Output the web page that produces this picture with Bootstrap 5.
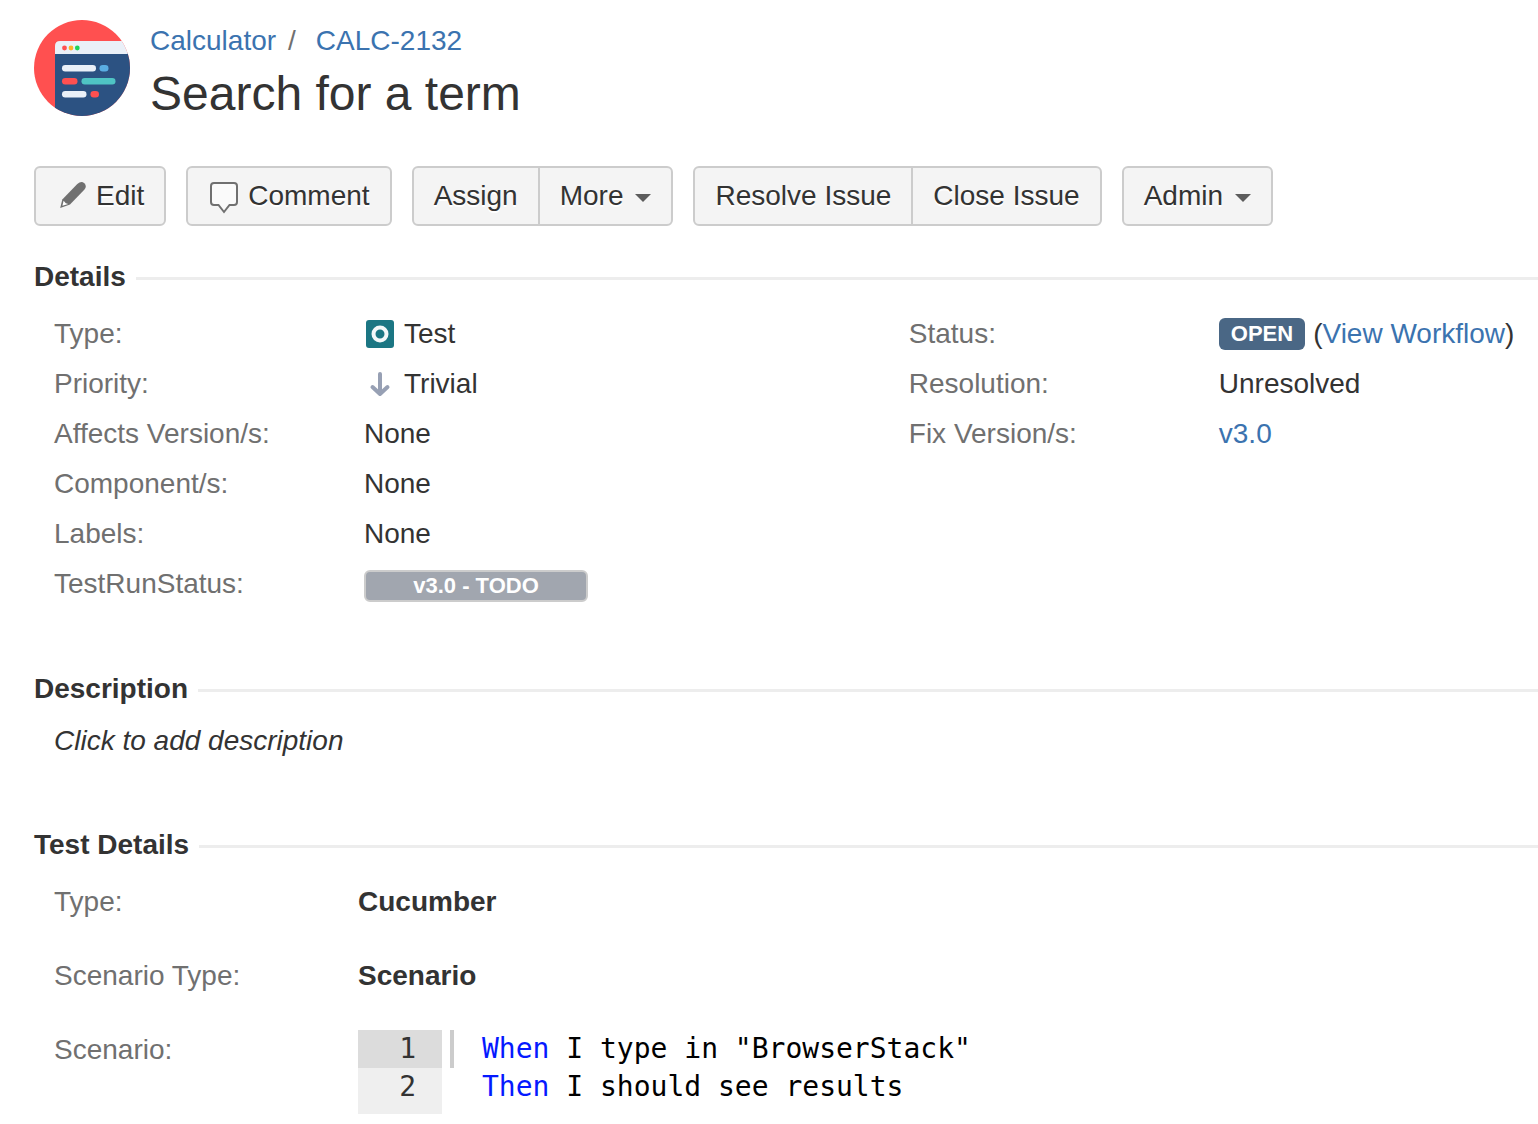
<!DOCTYPE html>
<html lang="en">
<head>
<meta charset="utf-8">
<meta name="viewport" content="width=device-width, initial-scale=1">
<title>CALC-2132 Search for a term</title>
<link rel="stylesheet" href="https://cdn.jsdelivr.net/npm/bootstrap@5.3.0/dist/css/bootstrap.min.css">
<style>
body{font-family:"Liberation Sans",Arial,sans-serif;font-size:28px;line-height:50px;color:#333;background:#fff}
a{color:#3b73af;text-decoration:none}
a:hover{text-decoration:underline}
.issue-page{padding:20px 0 10px 34px}
.issue-head{gap:20px;margin-bottom:40px}
.crumbs{line-height:42px}
.crumbs span{color:#707070;margin:0 20px 0 12px}
.issue-title{font-size:48px;line-height:64px;font-weight:400;margin:0}
.toolbar{gap:20px;margin-bottom:30px}
.btn-tool{--bs-btn-font-size:28px;--bs-btn-line-height:40px;--bs-btn-padding-x:20px;--bs-btn-padding-y:8px;--bs-btn-color:#333;--bs-btn-bg:#f4f4f4;--bs-btn-border-color:#ccc;--bs-btn-border-width:2px;--bs-btn-border-radius:6px;--bs-btn-hover-color:#333;--bs-btn-hover-bg:#e9e9e9;--bs-btn-hover-border-color:#999;--bs-btn-active-color:#333;--bs-btn-active-bg:#ddd;--bs-btn-active-border-color:#999;text-shadow:0 2px 0 #fff;white-space:nowrap}
.btn-tool.with-icon{padding-left:22px}
.btn-tool svg{margin-right:8px}
.toolbar .btn-group>.btn-tool+.btn-tool{margin-left:-2px}
.btn-group>.btn-tool{flex:none}
.btn-tool.dropdown-toggle{display:flex;align-items:center}
.btn-tool.dropdown-toggle::after{border-top:8px solid #5c5c5c;border-left:8px solid transparent;border-right:8px solid transparent;margin:3px 0 0 12px}
.issue-section{margin-bottom:59px}
.section-head{font-size:28px;line-height:42px;font-weight:700;margin:0 0 11px;gap:10px}
.section-head::after{content:"";flex:1;height:3px;margin-top:3px;background:#ededed}
.section-body{padding-left:20px}
.fields{margin:0}
.fields.main-col{flex:0 0 57.6%}
.field-row{display:flex}
.fields dt{font-weight:400;color:#707070;flex:0 0 310px}
.fields dd{margin:0;display:flex;align-items:center;white-space:nowrap}
.fields dd svg{margin-right:8px}
.status-tag{background:#4a6785;color:#fff;font-size:22px;line-height:32px;font-weight:700;border-radius:6px;padding:0 12px;margin-right:8px}
.run-tag{width:224px;background:#a1a6af;color:#fff;border:2px solid #ccc;border-radius:6px;font-size:22px;line-height:28px;font-weight:700;text-align:center;margin-top:4px}
.run-tag:hover{color:#fff}
.desc{line-height:40px;font-style:italic;padding-bottom:4px}
.test-fields .field-row+.field-row{margin-top:24px}
.test-fields dt{flex-basis:304px}
.test-fields dd{font-weight:700}
.fields dd.editor{font-family:"DejaVu Sans Mono",monospace;font-weight:400;line-height:38px;display:block;color:#000;margin-top:5px}
.code-line{display:flex}
.line-no{width:84px;padding-right:26px;text-align:right;color:#333;background:#efefef}
.code-line.current .line-no{background:#dcdcdc}
.code-line:last-child .line-no{padding-bottom:8px}
.code-line code{font:inherit;color:inherit;white-space:pre;margin-left:8px;padding-left:28px;border-left:4px solid transparent}
.code-line.current code{border-color:#ccc}
.kw{color:#0519ff}
</style>
<script src="https://cdn.jsdelivr.net/npm/bootstrap@5.3.0/dist/js/bootstrap.bundle.min.js"></script>
</head>
<body>
<main class="issue-page">
<header class="issue-head d-flex align-items-start">
<svg class="flex-shrink-0" width="96" height="96" viewBox="0 0 96 96" role="img" aria-label="Calculator project">
<defs><clipPath id="disc"><circle cx="48" cy="48" r="48"/></clipPath></defs>
<g clip-path="url(#disc)">
<rect width="96" height="96" fill="#ff5050"/>
<path d="M21 96V33h75v63z" fill="#2c5282"/>
<path d="M21 34V26q0-5 5-5h70v13z" fill="#eaf0f8"/>
<circle cx="30.500" cy="28" r="2.400" fill="#ff5050"/><circle cx="37" cy="28" r="2.400" fill="#fdb22b"/><circle cx="43.300" cy="28" r="2.400" fill="#1ed35c"/>
<rect x="28" y="45" width="34" height="6.500" rx="3.200" fill="#eaf0f8"/><rect x="65.500" y="45" width="9" height="6.500" rx="3.200" fill="#5aade2"/>
<rect x="28" y="58" width="15.500" height="6.500" rx="3.200" fill="#ff5050"/><rect x="47.500" y="58" width="34" height="6.500" rx="3.200" fill="#4fc4c4"/>
<rect x="28" y="71" width="24.500" height="6.500" rx="3.200" fill="#eaf0f8"/><rect x="56.500" y="71" width="8.500" height="6.500" rx="3.200" fill="#ff5050"/>
</g>
</svg>
<div>
<nav class="crumbs" aria-label="Breadcrumb"><a href="#">Calculator</a><span>/</span><a href="#">CALC-2132</a></nav>
<h1 class="issue-title">Search for a term</h1>
</div>
</header>

<div class="toolbar d-flex flex-wrap" role="toolbar" aria-label="Issue actions">
<button type="button" class="btn btn-tool with-icon d-flex align-items-center"><svg width="30" height="36" viewBox="0 0 30 36" aria-hidden="true"><path d="M4.300 21.500 19.300 6q4-3.500 7-.8 3 3 0 6.500L12 26.500 2.200 30z" fill="#707070"/><path d="m5.600 22.800-1.200 5 5.800-1.700-2.400-.8z" fill="#fff"/></svg>Edit</button>
<button type="button" class="btn btn-tool with-icon d-flex align-items-center"><svg width="30" height="36" viewBox="0 0 30 36" aria-hidden="true"><path d="M4 5h20q3 0 3 3v16q0 3-3 3h-4.500L14 34l-5.500-7H4q-3 0-3-3V8q0-3 3-3z" fill="#fafafa" stroke="#707070" stroke-width="2"/></svg>Comment</button>
<div class="btn-group">
<button type="button" class="btn btn-tool">Assign</button>
<button type="button" class="btn btn-tool dropdown-toggle" aria-haspopup="true">More</button>
</div>
<div class="btn-group">
<button type="button" class="btn btn-tool">Resolve Issue</button>
<button type="button" class="btn btn-tool">Close Issue</button>
</div>
<button type="button" class="btn btn-tool dropdown-toggle" aria-haspopup="true">Admin</button>
</div>

<section class="issue-section">
<h2 class="section-head d-flex align-items-center">Details</h2>
<div class="section-body d-flex">
<dl class="fields main-col">
<div class="field-row"><dt>Type:</dt><dd><svg width="32" height="32" viewBox="0 0 32 32" aria-hidden="true"><rect x="2" y="2" width="28" height="28" rx="3" fill="#1b7683"/><circle cx="16" cy="16" r="6.500" fill="none" stroke="#f3f8f9" stroke-width="4"/></svg>Test</dd></div>
<div class="field-row"><dt>Priority:</dt><dd><svg width="32" height="32" viewBox="0 0 32 32" fill="none" stroke="#97a0b4" stroke-width="4" stroke-linecap="round" stroke-linejoin="round" aria-hidden="true"><path d="M16 6v19M8.500 19l7.500 7 7.500-7"/></svg>Trivial</dd></div>
<div class="field-row"><dt>Affects Version/s:</dt><dd>None</dd></div>
<div class="field-row"><dt>Component/s:</dt><dd>None</dd></div>
<div class="field-row"><dt>Labels:</dt><dd>None</dd></div>
<div class="field-row"><dt>TestRunStatus:</dt><dd><a class="run-tag" href="#">v3.0 - TODO</a></dd></div>
</dl>
<dl class="fields">
<div class="field-row"><dt>Status:</dt><dd><span class="status-tag">OPEN</span>(<a href="#">View Workflow</a>)</dd></div>
<div class="field-row"><dt>Resolution:</dt><dd>Unresolved</dd></div>
<div class="field-row"><dt>Fix Version/s:</dt><dd><a href="#">v3.0</a></dd></div>
</dl>
</div>
</section>

<section class="issue-section">
<h2 class="section-head d-flex align-items-center">Description</h2>
<div class="section-body desc">Click to add description</div>
</section>

<section>
<h2 class="section-head d-flex align-items-center">Test Details</h2>
<div class="section-body">
<dl class="fields test-fields">
<div class="field-row"><dt>Type:</dt><dd>Cucumber</dd></div>
<div class="field-row"><dt>Scenario Type:</dt><dd>Scenario</dd></div>
<div class="field-row"><dt>Scenario:</dt><dd class="editor">
<div class="code-line current"><span class="line-no">1</span><code><span class="kw">When</span> I type in "BrowserStack"</code></div>
<div class="code-line"><span class="line-no">2</span><code><span class="kw">Then</span> I should see results</code></div>
</dd></div>
</dl>
</div>
</section>
</main>
</body>
</html>
